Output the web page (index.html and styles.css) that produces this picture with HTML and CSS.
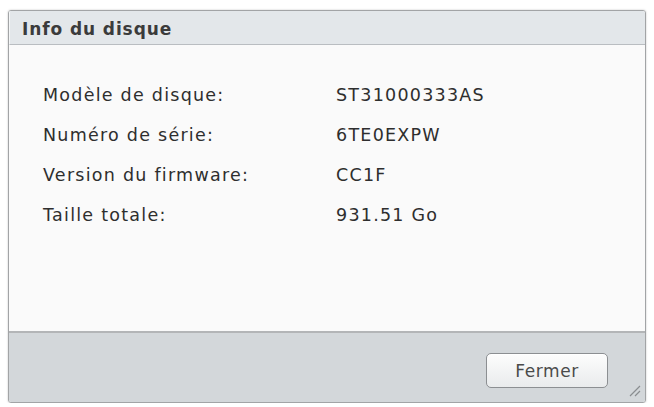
FILE: index.html
```html
<!DOCTYPE html>
<html lang="fr">
<head>
<meta charset="utf-8">
<link rel="stylesheet" href="styles.css">
</head>
<body>
<div class="window">
  <div class="header">Info du disque</div>
  <div class="content">
    <div class="row"><span class="label">Modèle de disque:</span><span class="value">ST31000333AS</span></div>
    <div class="row"><span class="label">Numéro de série:</span><span class="value">6TE0EXPW</span></div>
    <div class="row"><span class="label">Version du firmware:</span><span class="value">CC1F</span></div>
    <div class="row"><span class="label">Taille totale:</span><span class="value">931.51 Go</span></div>
  </div>
  <div class="footer">
    <button class="btn">Fermer</button>
    <svg class="grip" width="12" height="12" viewBox="0 0 12 12">
      <path d="M1 11 L11 1 M6 11 L11 6" stroke="#8a8d90" stroke-width="1.2" fill="none"/>
    </svg>
  </div>
</div>
</body>
</html>
```

FILE: styles.css
```css
html, body {
  margin: 0;
  padding: 0;
  background: #ffffff;
}
body {
  padding: 10px 8px 0 8px;
  font-family: "DejaVu Sans", Verdana, sans-serif;
}
.window {
  width: 636px;
  border: 1px solid #a2a4a6;
  border-radius: 3px;
  box-shadow: 0 0 2px rgba(0,0,0,0.25);
  display: flex;
  flex-direction: column;
  overflow: hidden;
  position: relative;
}
.header {
  height: 34px;
  box-sizing: border-box;
  background: #e3e7ea;
  border-bottom: 1px solid #b9bdc1;
  border-left: 1px solid #f4f6f7;
  padding: 2px 0 0 12px;
  display: flex;
  align-items: center;
  font-weight: bold;
  font-size: 17px;
  letter-spacing: 0.9px;
  color: #3b3b3b;
}
.content {
  height: 288px;
  box-sizing: border-box;
  background: #fafafa;
  padding: 30px 0 0 34px;
  border-bottom: 2px solid #b3b5b7;
}
.row {
  display: flex;
  height: 40px;
  align-items: center;
  font-size: 17.5px;
  letter-spacing: 1.25px;
  color: #2e2e2e;
}
.label {
  width: 293px;
}
.footer {
  height: 69px;
  box-sizing: border-box;
  background: #d3d7da;
  display: flex;
  justify-content: flex-end;
  align-items: flex-start;
  padding: 20px 37px 0 0;
}
.btn {
  width: 122px;
  height: 35px;
  border: 1px solid #8c8f92;
  border-radius: 5px;
  background: linear-gradient(#fdfdfd, #e9ebec);
  box-shadow: inset 0 1px 0 #ffffff;
  font-family: "DejaVu Sans", Verdana, sans-serif;
  font-size: 17px;
  letter-spacing: 0.6px;
  color: #4a4a4a;
  padding: 0;
}
.grip {
  position: absolute;
  right: 4px;
  bottom: 5px;
}
```
